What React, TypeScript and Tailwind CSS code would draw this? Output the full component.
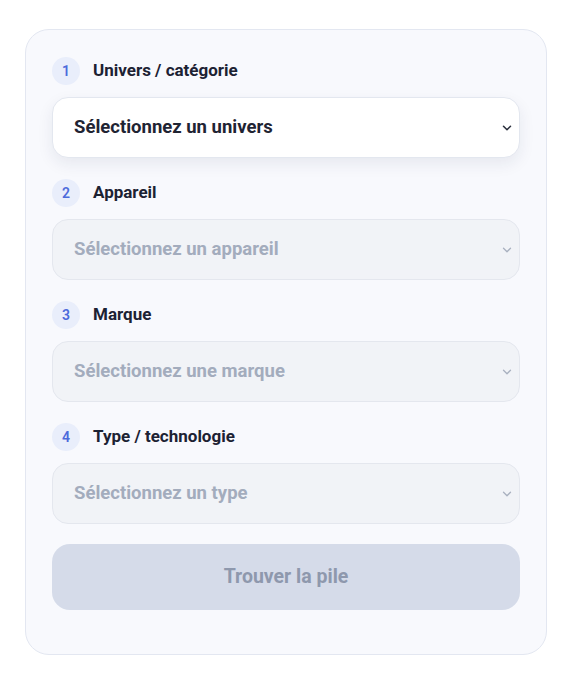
import { ChevronDown } from 'lucide-react';

const steps = [
  { n: 1, label: 'Univers / catégorie', placeholder: 'Sélectionnez un univers', active: true },
  { n: 2, label: 'Appareil', placeholder: 'Sélectionnez un appareil', active: false },
  { n: 3, label: 'Marque', placeholder: 'Sélectionnez une marque', active: false },
  { n: 4, label: 'Type / technologie', placeholder: 'Sélectionnez un type', active: false },
];

function StepField({ n, label, placeholder, active }: (typeof steps)[number]) {
  return (
    <div className="flex flex-col gap-3">
      <div className="flex items-center gap-[13px]">
        <span className="flex h-7 w-7 items-center justify-center rounded-full bg-[#e9eefb] text-[14px] font-semibold text-[#4d6bdb]">
          {n}
        </span>
        <span className="text-[17px] font-bold text-[#1c2233]">{label}</span>
      </div>
      {active ? (
        <div className="flex h-[61px] items-center justify-between rounded-[16px] border border-[#e3e7ef] bg-white pl-[21px] pr-[5px] shadow-[0_6px_16px_rgba(30,41,80,0.08)]">
          <span className="text-[18.5px] font-bold text-[#1f2433]">{placeholder}</span>
          <ChevronDown size={14} strokeWidth={2.6} className="text-[#2a2f3c]" />
        </div>
      ) : (
        <div className="flex h-[61px] items-center justify-between rounded-[16px] border border-[#e4e7ee] bg-[#f1f3f7] pl-[21px] pr-[5px]">
          <span className="text-[18.5px] font-bold text-[#a3acbd]">{placeholder}</span>
          <ChevronDown size={14} strokeWidth={2.2} className="text-[#a8b0bf]" />
        </div>
      )}
    </div>
  );
}

export default function App() {
  return (
    <div className="min-h-screen bg-white pl-[25px] pt-[29px] font-['Roboto','Liberation_Sans',sans-serif]">
      <div className="w-[522px] rounded-[24px] border border-[#e3e7f1] bg-[#f8f9fd] px-[26px] pb-[44px] pt-[27px]">
        <div className="flex flex-col gap-[21px]">
          {steps.map((s) => (
            <StepField key={s.n} {...s} />
          ))}
        </div>
        <button
          disabled
          className="mt-5 flex h-[66px] w-full items-center justify-center rounded-[18px] bg-[#d5dbe9] text-[19.5px] font-bold text-[#8e98ad]"
        >
          Trouver la pile
        </button>
      </div>
    </div>
  );
}
